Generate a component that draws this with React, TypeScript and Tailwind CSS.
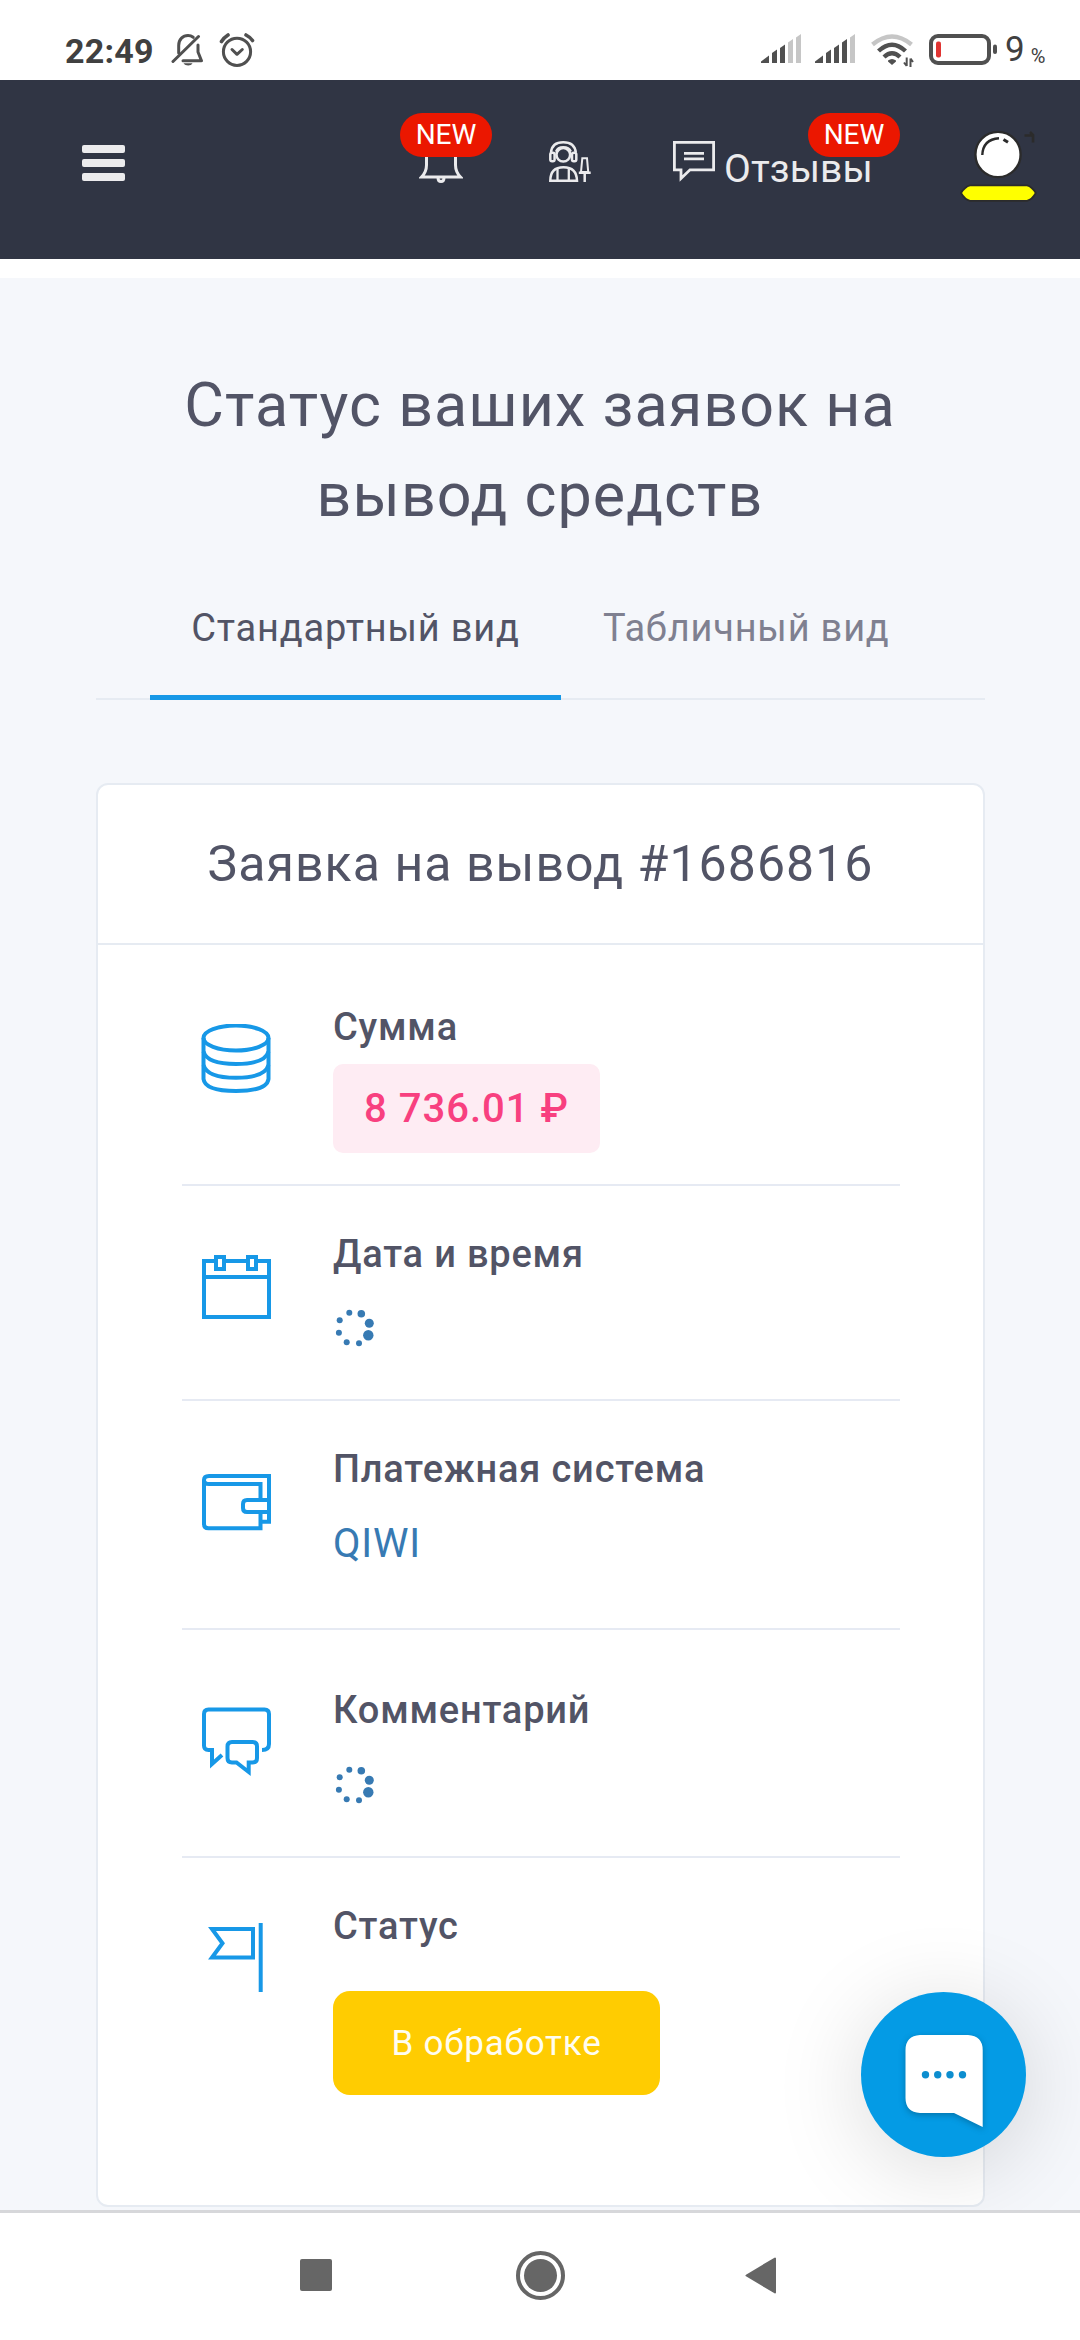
import React from "react";

function MutedBell() {
  return (
    <svg className="block" width="32" height="36" viewBox="171 33 32 36" fill="none" stroke="#505050" strokeWidth="3" strokeLinecap="round" strokeLinejoin="round">
      <path d="M178.700 53V45.500C178.700 39 183 35.500 188 35.500C190 35.500 191.800 36.200 193.200 37.300" />
      <path d="M173 61.500L198.500 36.500" />
      <path d="M198 45V52L201.500 60.700H183" />
      <path d="M183.500 63.300H192.500C191 66.300 185.500 66.300 183.500 63.300Z" fill="#505050" stroke="none" />
    </svg>
  );
}

function AlarmClock() {
  return (
    <svg className="block" width="36" height="36" viewBox="219 33 36 36" fill="none" stroke="#505050" strokeWidth="3" strokeLinecap="round" strokeLinejoin="round">
      <circle cx="237" cy="51.800" r="13.600" />
      <path d="M232 49.500L237 54.300L242.300 49.500" />
      <path d="M221.500 41.500Q224 37.500 228 35M246 35Q250 37 252.500 40.500" strokeWidth="3.600" />
    </svg>
  );
}

function Signal({ active }: { active: number }) {
  const bars = [
    "M0 29V27.500L8 21.500V29Z",
    "M11 29V19L16 15.500V29Z",
    "M19 29V14L24 10.500V29Z",
    "M27 29V8.500L32 5V29Z",
    "M35 29V3.500L40 0V29Z",
  ];
  return (
    <svg className="block" width="40" height="29" viewBox="0 0 40 29">
      {bars.map((d, i) => (
        <path key={d} d={d} fill={i < active ? "#505050" : "#c6c6c6"} />
      ))}
    </svg>
  );
}

function Wifi() {
  return (
    <svg className="block" width="44" height="36" viewBox="870 33 44 36" fill="none" strokeWidth="4.400">
      <path d="M872.500 44.500Q892 28.500 911.500 44.500" stroke="#c6c6c6" />
      <path d="M878.500 51Q892 38.500 905.500 51" stroke="#505050" />
      <path d="M884 57Q892 49.500 900 57" stroke="#505050" />
      <path d="M888 60.500Q892 57.500 896 60.500V61.500L892 65L888 61.500Z" fill="#505050" stroke="none" />
      <path d="M906.700 57.500V66M904 62.500L906.700 66M910.500 67V58.500M910.500 58.500L913 62" stroke="#505050" strokeWidth="2" />
    </svg>
  );
}

function Battery() {
  return (
    <svg className="block" width="69" height="31" viewBox="0 0 69 31" fill="none">
      <rect x="2" y="2" width="58" height="27" rx="7" stroke="#505050" strokeWidth="4" />
      <rect x="7" y="7.500" width="5" height="16" rx="2" fill="#e03432" />
      <rect x="64" y="10.500" width="4" height="9.500" rx="2" fill="#505050" />
    </svg>
  );
}

function BellIcon() {
  return (
    <svg className="block" width="44" height="42" viewBox="419 141 44 42" fill="none" stroke="#ebebed" strokeWidth="3">
      <path d="M426.500 155V165Q426.500 172 421.500 177H460.500Q455.500 172 455.500 165V155Q455.500 143 441 143Q426.500 143 426.500 155Z" />
      <path d="M438 177.500Q438 181.500 441 181.500T444 177.500" />
    </svg>
  );
}

function SupportIcon() {
  return (
    <svg className="block" width="42" height="42" viewBox="549 141 42 42" fill="none" stroke="#ebebed" strokeWidth="2.500">
      <circle cx="563.300" cy="154.800" r="6.800" />
      <path d="M551 152.500Q552 142.300 563.300 142.300T575.800 152.500" />
      <path d="M555.800 151.500Q557.500 147 563.300 147T571 151.500" strokeWidth="2" />
      <rect x="550.300" y="152.800" width="4.300" height="8.500" rx="1.800" />
      <rect x="572" y="152.800" width="4.300" height="8.500" rx="1.800" />
      <path d="M550.300 180.800Q550.300 167.300 563.500 167.300T577 180.800Z" />
      <path d="M557.500 169V181M568.800 169V181" strokeWidth="2.300" />
      <path d="M582.300 158.300H587L588.200 172H581Z" strokeWidth="2" />
      <path d="M578.800 172.800H590.700M584.700 172V182" />
    </svg>
  );
}

function FeedbackIcon() {
  return (
    <svg className="block shrink-0" width="43" height="42" viewBox="672 140 43 42" fill="none" stroke="#ebebed" strokeWidth="2.800">
      <path d="M674.400 142.400H713.600V169.800H690L681 178.500V169.800H674.400Z" />
      <path d="M684 153.300H704M684 158.800H704" />
    </svg>
  );
}

function Avatar() {
  return (
    <svg className="block shrink-0" width="80" height="80" viewBox="958 126 80 80" fill="none">
      <circle cx="998" cy="154.500" r="22.600" fill="#fff" stroke="#2b2b2b" strokeWidth="2.400" />
      <path d="M982.300 155Q983 139.500 999 138.300" stroke="#2b2b2b" strokeWidth="2.400" />
      <path d="M1003.500 139.500L1008 142.300" stroke="#2b2b2b" strokeWidth="3" />
      <path d="M1024.500 135.500H1033V142.500M1030 132L1033.500 135.500" stroke="#2b2b2b" strokeWidth="2.600" />
      <path d="M970 185.300H1027Q1032 186.500 1035.800 193Q1032 199.800 1027 200.800H970Q965 199.800 961 193Q965 186.500 970 185.300Z" fill="#ff0" stroke="#2b2b2b" strokeWidth="1.800" />
    </svg>
  );
}

function DatabaseIcon() {
  return (
    <svg className="block" width="70" height="70" viewBox="201 1024 70 70" fill="none" stroke="#1798e7" strokeWidth="4">
      <ellipse cx="236" cy="1038" rx="32.500" ry="12.500" />
      <path d="M203.500 1038V1079Q205 1091 236 1091T268.500 1079V1038" />
      <path d="M203.500 1051.500Q207 1064 236 1064T268.500 1051.500M203.500 1065Q207 1077.800 236 1077.800T268.500 1065" />
    </svg>
  );
}

function CalendarIcon() {
  return (
    <svg className="block" width="70" height="70" viewBox="201 1251 70 70" fill="none" stroke="#1798e7" strokeWidth="4">
      <path d="M214 1261H204V1317H269V1261H258M226 1261H246M204 1277H269" />
      <rect x="216" y="1257" width="8" height="12" />
      <rect x="248" y="1257" width="8" height="12" />
    </svg>
  );
}

function WalletIcon() {
  return (
    <svg className="block" width="70" height="70" viewBox="201 1466 70 70" fill="none" stroke="#1798e7" strokeWidth="4">
      <path d="M260.500 1500V1484H209Q204 1484 204 1480T209 1476H269V1521.700H262" />
      <path d="M204 1480V1524Q204 1528.300 208.500 1528.300H260.500V1513" />
      <path d="M269 1500H247Q243 1500 243 1504V1508Q243 1512 247 1512H269" />
    </svg>
  );
}

function CommentsIcon() {
  return (
    <svg className="block" width="70" height="70" viewBox="201 1707 70 70" fill="none" stroke="#1798e7" strokeWidth="4">
      <path d="M262 1750Q269 1750 269 1744V1714Q269 1709.500 264.500 1709.500H208.500Q204 1709.500 204 1714V1745.500Q204 1750 208.500 1750H212V1764L222 1755" />
      <path d="M232 1742H252.500Q257 1742 257 1746.500V1758Q257 1762.500 252.500 1762.500H248.700V1772L236.500 1762.500H232Q227.500 1762.500 227.500 1758V1746.500Q227.500 1742 232 1742Z" />
    </svg>
  );
}

function FlagIcon() {
  return (
    <svg className="block" width="70" height="70" viewBox="201 1923 70 70" fill="none" stroke="#1798e7" strokeWidth="4">
      <path d="M253 1929H212L222.500 1943.300L212 1957.500H253Z" />
      <path d="M260.700 1923V1992" />
    </svg>
  );
}

function Spinner() {
  const dots = [
    [13.3, 3.7, 3],
    [25.3, 4.7, 3.8],
    [33.3, 14.3, 4.5],
    [32.3, 26.3, 5.2],
    [23, 34.3, 3],
    [10.7, 33.3, 3],
    [2.9, 23.7, 3],
    [3.7, 11.3, 3],
  ];
  return (
    <svg className="block overflow-visible" width="40" height="40" viewBox="0 0 40 40">
      {dots.map(([cx, cy, r]) => (
        <circle key={`${cx}-${cy}`} cx={cx} cy={cy} r={r} fill="#377ab3" />
      ))}
    </svg>
  );
}

function NewBadge({ className }: { className: string }) {
  return (
    <span className={`absolute flex h-[44px] w-[92px] items-center justify-center rounded-full bg-[#eb1700] text-[28px] leading-none text-white ${className}`}>
      NEW
    </span>
  );
}

function Row({ icon, label, className, children }: { icon: React.ReactNode; label: string; className: string; children: React.ReactNode }) {
  return (
    <section className={`mr-[83px] ml-[84px] flex border-[#e6eaf3] pl-[19px] ${className}`}>
      <div className="mt-[24px] w-[132px] shrink-0">{icon}</div>
      <div>
        <h3 className="text-[38px] leading-[54px] font-medium tracking-[0.8px]">{label}</h3>
        {children}
      </div>
    </section>
  );
}

export default function App() {
  return (
    <div className="flex h-[2340px] w-[1080px] flex-col overflow-hidden bg-white font-['Roboto',sans-serif] text-[#525466]">
      <div className="flex h-[80px] shrink-0 items-start pt-[33px] pl-[65px] text-[#404040]">
        <span className="mt-[1px] w-[106px] text-[34px] leading-[34px] font-bold tracking-[0.2px]">22:49</span>
        <MutedBell />
        <div className="ml-[16px]">
          <AlarmClock />
        </div>
        <div className="mt-px ml-[506px]">
          <Signal active={3} />
        </div>
        <div className="mt-px ml-[14px]">
          <Signal active={4} />
        </div>
        <div className="ml-[15px]">
          <Wifi />
        </div>
        <div className="mt-px ml-[15px]">
          <Battery />
        </div>
        <span className="ml-[7px] text-[35px] leading-[34px]">9</span>
        <span className="mt-[12px] ml-[6px] text-[20px] leading-[22px]">%</span>
      </div>

      <header className="flex h-[179px] shrink-0 items-start bg-[#303544] text-[#ebebed]">
        <div className="mt-[65px] ml-[82px] flex w-[43px] flex-col gap-[6px]">
          <span className="h-[8px] rounded-[2px] bg-[#ebebed]" />
          <span className="h-[8px] rounded-[2px] bg-[#ebebed]" />
          <span className="h-[8px] rounded-[2px] bg-[#ebebed]" />
        </div>
        <div className="relative mt-[61px] ml-[294px]">
          <BellIcon />
          <NewBadge className="-top-[28px] -left-[19px]" />
        </div>
        <div className="mt-[61px] ml-[86px]">
          <SupportIcon />
        </div>
        <div className="relative mt-[60px] ml-[81px] flex w-[202px]">
          <FeedbackIcon />
          <span className="mt-[4px] ml-[9px] text-[39px] leading-[50px] tracking-[0.1px]">Отзывы</span>
          <NewBadge className="-top-[27px] left-[136px]" />
        </div>
        <div className="mt-[46px] ml-[84px]">
          <Avatar />
        </div>
      </header>

      <main className="mt-[19px] flex h-[1932px] shrink-0 flex-col bg-[#f5f7fb] px-[96px]">
        <h1 className="mt-[82px] text-center text-[61px] leading-[90px] tracking-[1.05px]">
          Статус ваших заявок на
          <br />
          вывод средств
        </h1>

        <nav className="-mr-px flex h-[160px] border-b-2 border-[#e6ebf2] pl-[54px] text-[38px] leading-[54px] tracking-[0.8px]">
          <span className="-mb-[2px] flex w-[411px] justify-center border-b-[5px] border-[#1798e7] pt-[61px]">Стандартный вид</span>
          <span className="ml-[42px] pt-[61px] text-[#7f8090]">Табличный вид</span>
        </nav>

        <article className="-mr-px mt-[83px] h-[1424px] shrink-0 rounded-[12px] border-2 border-[#e6ebf2] bg-white">
          <h2 className="flex h-[160px] items-center justify-center border-b-2 border-[#e6ebf2] text-[50px] leading-[60px] tracking-[1.05px]">
            Заявка на вывод #1686816
          </h2>

          <Row icon={<DatabaseIcon />} label="Сумма" className="h-[241px] border-b-2 pt-[55px]">
            <div className="mt-[10px] flex h-[89px] w-[267px] items-center justify-center rounded-[10px] bg-[#feecf3] text-[40px] leading-none font-medium tracking-[1px] whitespace-nowrap text-[#f8407f]">
              8 736.01 ₽
            </div>
          </Row>
          <Row icon={<CalendarIcon />} label="Дата и время" className="h-[215px] border-b-2 pt-[41px]">
            <div className="mt-[28px] ml-[3px]">
              <Spinner />
            </div>
          </Row>
          <Row icon={<WalletIcon />} label="Платежная система" className="h-[229px] border-b-2 pt-[41px]">
            <div className="mt-[20px] text-[40px] leading-[56px] tracking-[0.8px] text-[#377ab3]">QIWI</div>
          </Row>
          <Row icon={<CommentsIcon />} label="Комментарий" className="h-[228px] border-b-2 pt-[53px]">
            <div className="mt-[29px] ml-[3px]">
              <Spinner />
            </div>
          </Row>
          <Row icon={<FlagIcon />} label="Статус" className="pt-[41px]">
            <div className="mt-[38px] flex h-[104px] w-[327px] items-center justify-center rounded-[17px] bg-[#ffcc01] text-[35px] leading-none tracking-[0.8px] text-[#fffdf0]">
              В обработке
            </div>
          </Row>
        </article>
      </main>

      <button className="absolute top-[1992px] left-[861px] flex h-[165px] w-[165px] rounded-full bg-[#049be5] shadow-[0_12px_90px_rgba(0,0,0,0.15)]">
        <svg className="block" width="165" height="165" viewBox="861 1992 165 165">
          <path d="M920 2035H968Q982.700 2036 982.700 2050V2127L954 2113H920Q905.500 2112 905.500 2098V2050Q905.500 2036 920 2035Z" fill="#fff" className="drop-shadow-[0_2px_3px_rgba(0,0,0,0.25)]" />
          <g fill="#0d8ecf">
            <circle cx="925.500" cy="2074.700" r="3.700" />
            <circle cx="937.700" cy="2074.700" r="3.700" />
            <circle cx="950" cy="2074.700" r="3.700" />
            <circle cx="962.500" cy="2074.700" r="3.700" />
          </g>
        </svg>
      </button>

      <footer className="relative flex h-[130px] shrink-0 items-start border-t-[3px] border-[#d6d7da] bg-white">
        <span className="mt-[46px] ml-[300px] h-[32px] w-[32px] rounded-[2px] bg-[#666]" />
        <span className="mt-[38px] ml-[184px] flex h-[49px] w-[49px] items-center justify-center rounded-full border-4 border-[#666]">
          <span className="h-[33px] w-[33px] rounded-full bg-[#666]" />
        </span>
        <svg className="mt-[43px] ml-[180px] block" width="32" height="39" viewBox="0 0 32 39">
          <path d="M1.500 19.500L30 2.500V36.500Z" fill="#666" stroke="#666" strokeWidth="2" strokeLinejoin="round" />
        </svg>
      </footer>
    </div>
  );
}
